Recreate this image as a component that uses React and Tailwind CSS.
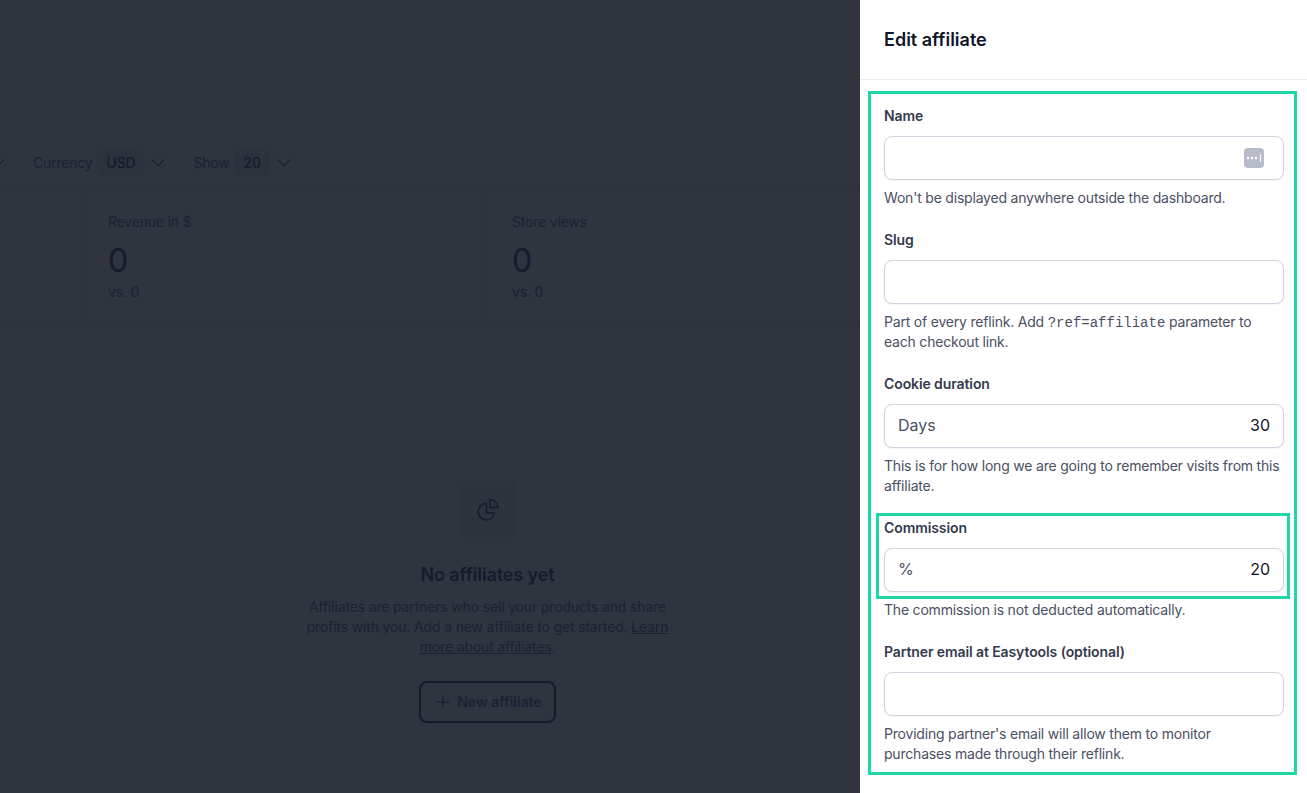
import React from "react";
import { ChevronDown, Plus } from "lucide-react";

const Filter = ({ label, value }) => (
  <div className="flex items-center">
    <span className="text-[#1c2133]">{label}</span>
    <span className="ml-[5px] rounded-md bg-[#2d313c] px-[9px] py-[3px] font-medium leading-[20px] text-[#161b2e]">
      {value}
    </span>
    <ChevronDown className="ml-[3px] h-[22px] w-[22px] text-[#1c2133]" strokeWidth={1.25} />
  </div>
);

const Stat = ({ label, className }) => (
  <div className={`border-l border-[#2d313c] pt-[24px] ${className}`}>
    <p className="text-sm leading-5 text-[#1c2133]">{label}</p>
    <p className="mt-[11px] text-[32px] leading-[36px] tracking-normal text-[#161b2e]">0</p>
    <p className="mt-[3px] text-sm leading-5 text-[#1c2133]">vs. 0</p>
  </div>
);

const Field = ({ label, children, help }) => (
  <div>
    <p className="text-sm font-semibold leading-5 tracking-[-0.1px] text-[#343a4e]">{label}</p>
    <div className="mt-[10px] flex h-11 items-center justify-between rounded-lg border border-[#d1d4de] bg-white px-[13px] shadow-[0_1px_2px_rgba(16,24,40,0.06)]">
      {children}
    </div>
    <p className="mt-2 text-sm leading-5 text-[#4a5063]">{help}</p>
  </div>
);

const Affix = ({ left, right }) => (
  <>
    <span className="-mt-[3px] text-base tracking-normal text-[#4a5063]">{left}</span>
    <span className="-mt-[3px] text-base tracking-normal text-[#10152a]">{right}</span>
  </>
);

export default function App() {
  return (
    <div className="flex h-[793px] w-[1307px] overflow-hidden font-['Inter',sans-serif] tracking-[-0.2px]">
      <main className="flex w-[860px] flex-col overflow-hidden bg-[#30343f]">
        <div className="ml-[-13px] mt-[149px] flex h-7 items-center gap-[24px] text-sm">
          <ChevronDown className="h-[22px] w-[22px] text-[#1c2133]" strokeWidth={1.25} />
          <Filter label="Currency" value="USD" />
          <Filter label="Show" value="20" />
        </div>

        <div className="mt-[10px] flex h-[140px] border-b border-t border-[#2d313c] pl-[84px]">
          <Stat label="Revenue in $" className="w-[403px] pl-[23px]" />
          <Stat label="Store views" className="flex-1 pl-6" />
        </div>

        <div className="flex flex-col items-center pl-[115px] pt-[154px]">
          <div className="flex h-14 w-14 items-center justify-center rounded-lg bg-[#2e323d]">
            <svg width="24" height="24" viewBox="0 0 24 24" fill="none" stroke="#161b2e" strokeWidth="1.5" strokeLinejoin="round">
              <path d="M10.5 6.5a8.2 8.2 0 1 0 8 9.5h-8z" />
              <path d="M14 2.5v8h8a8 8 0 0 0-8-8z" />
            </svg>
          </div>
          <h2 className="mt-[24px] text-lg font-semibold leading-7 tracking-[-0.1px] text-[#161b2e]">No affiliates yet</h2>
          <p className="mt-[8px] w-[376px] text-center text-sm leading-5 tracking-[-0.16px] text-[#1c2133]">
            Affiliates are partners who sell your products and share profits with you. Add a new affiliate to get started.{" "}
            <span className="underline">Learn more about affiliates</span>.
          </p>
          <button className="mt-[24px] flex h-[42px] w-[137px] items-center justify-center gap-1 rounded-lg border-2 border-[#161b2e] text-sm font-semibold tracking-normal text-[#1c2133]">
            <Plus className="h-5 w-5" strokeWidth={1.5} />
            New affiliate
          </button>
        </div>
      </main>

      <aside className="w-[447px] bg-white">
        <header className="flex h-20 items-center border-b border-[#eaecf0] pl-6">
          <h1 className="text-lg font-semibold tracking-normal text-[#10152a]">Edit affiliate</h1>
        </header>
        <div className="ml-2 mr-[10px] mt-[11px] flex h-[684px] flex-col gap-[22px] border-[3px] border-[#1fd6a8] pl-[13px] pr-[10px] pt-3">
          <Field label="Name" help="Won't be displayed anywhere outside the dashboard.">
            <span />
            <svg width="20" height="20" viewBox="0 0 20 20" className="mr-[6px]">
              <rect width="20" height="20" rx="4" fill="#b7bcc8" />
              <circle cx="4" cy="10" r="1.2" fill="#fff" />
              <circle cx="8" cy="10" r="1.2" fill="#fff" />
              <circle cx="12" cy="10" r="1.2" fill="#fff" />
              <rect x="16" y="6" width="1" height="8" fill="#fff" />
            </svg>
          </Field>
          <Field
            label="Slug"
            help={
              <>
                Part of every reflink. Add <code className="font-['Liberation_Mono',monospace] leading-none tracking-normal">?ref=affiliate</code> parameter to each checkout link.
              </>
            }
          />
          <Field label="Cookie duration" help="This is for how long we are going to remember visits from this affiliate.">
            <Affix left="Days" right="30" />
          </Field>
          <div className="relative">
            <Field label="Commission" help="The commission is not deducted automatically.">
              <Affix left="%" right="20" />
            </Field>
            <div className="pointer-events-none absolute left-[-8px] right-[-6px] top-[-5px] h-[86px] border-[3px] border-[#1fd6a8]" />
          </div>
          <Field
            label="Partner email at Easytools (optional)"
            help={
              <>
                Providing partner's email will allow them to monitor
                <br />
                purchases made through their reflink.
              </>
            }
          />
        </div>
      </aside>
    </div>
  );
}
